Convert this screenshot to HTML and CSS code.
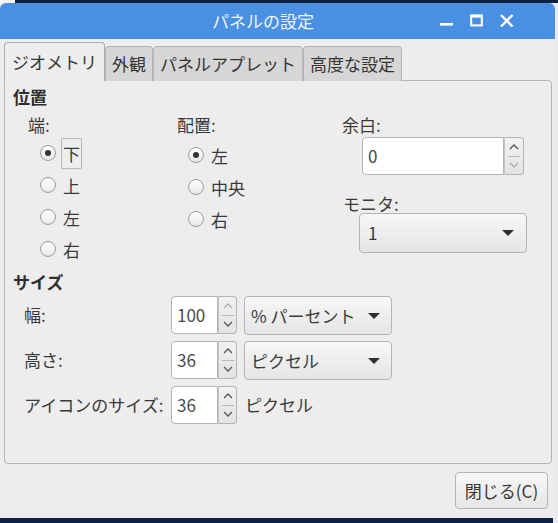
FILE: index.html
```html
<!DOCTYPE html>
<html lang="ja">
<head>
<meta charset="utf-8">
<title>パネルの設定</title>
<link rel="stylesheet" href="styles.css">
</head>
<body>
<div class="desk-top"><div class="desk-corner"></div><div class="desk-band"></div></div>
<div class="window">
  <div class="titlebar">
    <span class="title">パネルの設定</span>
    <div class="controls">
      <svg class="ctl ctl-min" width="14" height="14" viewBox="0 0 14 14"><rect x="0" y="9" width="13" height="2.6" fill="#fff"/></svg>
      <svg class="ctl ctl-max" width="14" height="14" viewBox="0 0 14 14"><rect x="1.2" y="1.6" width="10.6" height="9.8" fill="none" stroke="#fff" stroke-width="2"/><rect x="0.2" y="0.6" width="12.6" height="3" fill="#fff"/></svg>
      <svg class="ctl ctl-close" width="14" height="14" viewBox="0 0 14 14"><path d="M1 1 L12.5 12.5 M12.5 1 L1 12.5" stroke="#fff" stroke-width="2.4" fill="none"/></svg>
    </div>
  </div>
  <div class="body">
    <div class="tabs">
      <div class="tab tab-active">ジオメトリ</div>
      <div class="tab">外観</div>
      <div class="tab">パネルアプレット</div>
      <div class="tab">高度な設定</div>
    </div>
    <div class="notebook">
      <div class="heading">位置</div>
      <div class="pos-row">
        <div class="col col-edge">
          <div class="field-label">端:</div>
          <div class="radios radios-edge">
            <div class="radio-row"><span class="radio checked"></span><span class="radio-label focused">下</span></div>
            <div class="radio-row"><span class="radio"></span><span class="radio-label">上</span></div>
            <div class="radio-row"><span class="radio"></span><span class="radio-label">左</span></div>
            <div class="radio-row"><span class="radio"></span><span class="radio-label">右</span></div>
          </div>
        </div>
        <div class="col col-align">
          <div class="field-label">配置:</div>
          <div class="radios radios-align">
            <div class="radio-row"><span class="radio checked"></span><span class="radio-label">左</span></div>
            <div class="radio-row"><span class="radio"></span><span class="radio-label">中央</span></div>
            <div class="radio-row"><span class="radio"></span><span class="radio-label">右</span></div>
          </div>
        </div>
        <div class="col col-right">
          <div class="field-label">余白:</div>
          <div class="spin spin-margin">
            <div class="spin-entry">0</div>
            <div class="spin-btns">
              <span class="spin-up"><svg width="10" height="6" viewBox="0 0 10 6"><path d="M1 5 L5 1 L9 5" fill="none" stroke="#555" stroke-width="1.3"/></svg></span>
              <span class="spin-sep"></span>
              <span class="spin-down disabled"><svg width="10" height="6" viewBox="0 0 10 6"><path d="M1 1 L5 5 L9 1" fill="none" stroke="#555" stroke-width="1.3"/></svg></span>
            </div>
          </div>
          <div class="field-label monitor-label">モニタ:</div>
          <div class="combo combo-monitor"><span>1</span><span class="arrow"></span></div>
        </div>
      </div>
      <div class="heading heading-size">サイズ</div>
      <div class="size-grid">
        <div class="size-label">幅:</div>
        <div class="spin">
          <div class="spin-entry">100</div>
          <div class="spin-btns">
            <span class="spin-up disabled"><svg width="10" height="6" viewBox="0 0 10 6"><path d="M1 5 L5 1 L9 5" fill="none" stroke="#555" stroke-width="1.3"/></svg></span>
            <span class="spin-sep"></span>
            <span class="spin-down"><svg width="10" height="6" viewBox="0 0 10 6"><path d="M1 1 L5 5 L9 1" fill="none" stroke="#555" stroke-width="1.3"/></svg></span>
          </div>
        </div>
        <div class="combo"><span>% パーセント</span><span class="arrow"></span></div>

        <div class="size-label">高さ:</div>
        <div class="spin">
          <div class="spin-entry">36</div>
          <div class="spin-btns">
            <span class="spin-up"><svg width="10" height="6" viewBox="0 0 10 6"><path d="M1 5 L5 1 L9 5" fill="none" stroke="#555" stroke-width="1.3"/></svg></span>
            <span class="spin-sep"></span>
            <span class="spin-down"><svg width="10" height="6" viewBox="0 0 10 6"><path d="M1 1 L5 5 L9 1" fill="none" stroke="#555" stroke-width="1.3"/></svg></span>
          </div>
        </div>
        <div class="combo"><span>ピクセル</span><span class="arrow"></span></div>

        <div class="size-label">アイコンのサイズ:</div>
        <div class="spin">
          <div class="spin-entry">36</div>
          <div class="spin-btns">
            <span class="spin-up"><svg width="10" height="6" viewBox="0 0 10 6"><path d="M1 5 L5 1 L9 5" fill="none" stroke="#555" stroke-width="1.3"/></svg></span>
            <span class="spin-sep"></span>
            <span class="spin-down"><svg width="10" height="6" viewBox="0 0 10 6"><path d="M1 1 L5 5 L9 1" fill="none" stroke="#555" stroke-width="1.3"/></svg></span>
          </div>
        </div>
        <div class="unit-label">ピクセル</div>
      </div>
    </div>
    <div class="footer">
      <button class="close-btn">閉じる(C)</button>
    </div>
  </div>
</div>
<div class="desk-bottom"></div>
</body>
</html>
```

FILE: styles.css
```css
* { box-sizing: border-box; }

html, body {
  margin: 0;
  padding: 0;
}

body {
  width: 558px;
  height: 523px;
  overflow: hidden;
  background: #e9ebee;
  font-family: "Noto Sans CJK JP", "Noto Sans", sans-serif;
  font-size: 17px;
  color: #333;
}

.desk-top {
  display: flex;
  height: 3px;
}
.desk-corner { width: 15px; background: #f4f4f4; }
.desk-band { flex: 1; background: #0d2143; }

.window {
  width: 555px;
  height: 515px;
  background: #ededed;
  border-radius: 6px 6px 0 0;
  overflow: hidden;
  display: flex;
  flex-direction: column;
}

.titlebar {
  height: 36px;
  flex: none;
  background: #4a90e2;
  display: flex;
  align-items: center;
}

.title {
  margin-left: 212px;
  color: #eef4fc;
  font-size: 17px;
  line-height: 20px;
}

.controls {
  margin-left: auto;
  margin-right: 41px;
  display: flex;
  align-items: center;
  gap: 16px;
  height: 14px;
}

.ctl { display: block; }

.body {
  flex: 1;
  padding: 3px 3px 0 4px;
  display: flex;
  flex-direction: column;
}

.tabs {
  display: flex;
  align-items: flex-end;
  height: 39px;
  margin-bottom: -1px;
  position: relative;
  z-index: 1;
}

.tab {
  height: 35px;
  padding: 0 6px;
  background: #d6d6d6;
  border: 1px solid #b4b4b4;
  border-bottom: none;
  border-radius: 4px 4px 0 0;
  display: flex;
  align-items: center;
  line-height: 20px;
  color: #353535;
}

.tab-active {
  height: 39px;
  background: #ededed;
  padding: 0 7px;
  border-color: #b0b0b0;
}

.notebook {
  height: 384px;
  border: 1px solid #b4b4b4;
  border-radius: 0 4px 4px 4px;
  padding: 6px 8px 0 8px;
}

.heading {
  font-weight: bold;
  line-height: 20px;
  height: 20px;
  color: #2e2e2e;
}

.pos-row {
  display: flex;
  margin-top: 8px;
}

.col-edge { margin-left: 15px; width: 149px; }
.col-align { width: 165px; }
.col-right { flex: 1; }

.field-label {
  line-height: 20px;
  height: 20px;
  color: #3a3a3a;
}

.radios-edge { margin-top: 2px; padding-left: 12px; }
.radios-align { margin-top: 4px; padding-left: 11px; }

.radio-row {
  height: 32px;
  display: flex;
  align-items: center;
}

.radio {
  width: 16px;
  height: 16px;
  border-radius: 50%;
  border: 1px solid #9c9c9c;
  background: linear-gradient(#ffffff, #e8e8e8);
  display: flex;
  align-items: center;
  justify-content: center;
  flex: none;
}

.radio.checked::after {
  content: "";
  width: 6px;
  height: 6px;
  border-radius: 50%;
  background: #333;
}

.radio-label {
  margin-left: 5px;
  line-height: 29px;
  padding: 0 1px;
  border: 1px solid transparent;
  color: #3a3a3a;
}

.radio-label.focused {
  border-color: #b8b8b8;
  border-radius: 1px;
}

.spin {
  display: flex;
  height: 38px;
}

.spin-margin {
  margin-top: 2px;
  margin-left: 20px;
  width: 162px;
}

.spin-entry {
  flex: 1;
  background: #fff;
  border: 1px solid #b4b4b4;
  border-radius: 4px 0 0 4px;
  display: flex;
  align-items: center;
  padding-left: 5px;
  color: #4a4a4a;
  line-height: 20px;
}

.spin-btns {
  width: 20px;
  flex: none;
  border: 1px solid #b4b4b4;
  border-left: 1px solid #c4c4c4;
  border-radius: 0 4px 4px 0;
  background: linear-gradient(#f2f2f2, #e3e3e3);
  display: flex;
  flex-direction: column;
  align-items: center;
}

.spin-up, .spin-down {
  flex: 1;
  display: flex;
  align-items: center;
  justify-content: center;
}

.spin-up svg, .spin-down svg { display: block; }

.disabled { opacity: 0.4; }

.spin-sep {
  width: 12px;
  height: 1px;
  background: #b8b8b8;
  flex: none;
}

.monitor-label {
  margin-top: 20px;
  margin-left: 1px;
  height: 18px;
  line-height: 18px;
}

.combo {
  height: 39px;
  border: 1px solid #b4b4b4;
  border-radius: 4px;
  background: linear-gradient(#f7f7f7, #e5e5e5);
  display: flex;
  align-items: center;
  justify-content: space-between;
  padding: 0 11px 0 6px;
  color: #3a3a3a;
  line-height: 20px;
}

.combo-monitor {
  margin-left: 17px;
  width: 168px;
  height: 40px;
  padding: 0 12px 0 8px;
}

.arrow {
  width: 0;
  height: 0;
  border-left: 6px solid transparent;
  border-right: 6px solid transparent;
  border-top: 6px solid #2e2e2e;
}

.heading-size { margin-top: 7px; }

.size-grid {
  display: grid;
  grid-template-columns: 140px 66px 148px;
  grid-auto-rows: 38px;
  column-gap: 7px;
  row-gap: 7px;
  margin-top: 4px;
  margin-left: 11px;
}

.size-grid .spin-entry { padding-left: 5px; }
.size-grid .spin-btns { width: 19px; }

.size-label, .unit-label {
  display: flex;
  align-items: center;
  line-height: 20px;
  color: #3a3a3a;
  white-space: nowrap;
}

.unit-label { padding-left: 1px; }

.footer {
  display: flex;
  justify-content: flex-end;
  padding-top: 8px;
  padding-right: 4px;
}

.close-btn {
  width: 93px;
  height: 37px;
  border: 1px solid #b4b4b4;
  border-radius: 4px;
  background: linear-gradient(#f7f7f7, #e6e6e6);
  font-family: "Noto Sans CJK JP", "Noto Sans", sans-serif;
  font-size: 17px;
  color: #3a3a3a;
  padding: 0;
  line-height: 20px;
}

.desk-bottom {
  height: 5px;
  width: 553px;
  background: #0d2143;
}
```
